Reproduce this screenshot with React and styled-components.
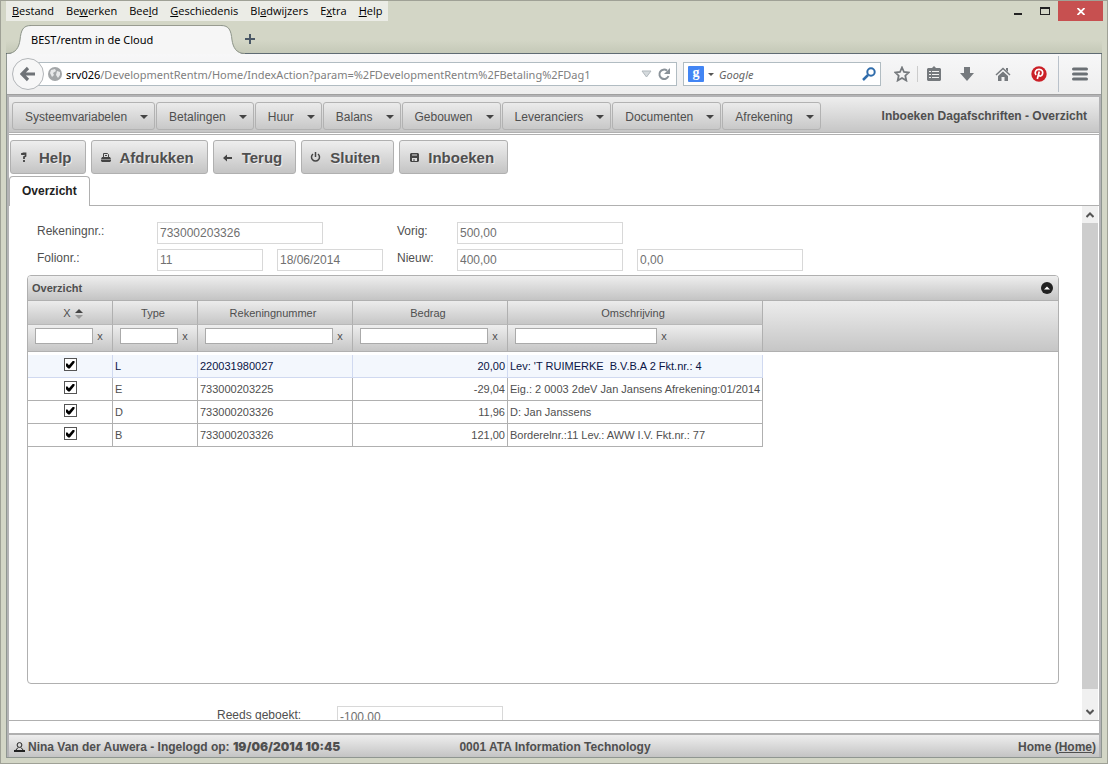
import styled, { createGlobalStyle } from "styled-components";

const GlobalStyle = createGlobalStyle`
  * {
    box-sizing: border-box;
  }
  body {
    margin: 0;
    font-family: "Liberation Sans", Arial, sans-serif;
    font-size: 12px;
    color: #4f4f4f;
  }
  button, input {
    font-family: inherit;
    font-size: inherit;
    color: inherit;
    margin: 0;
  }
  button {
    border: none;
    background: none;
    padding: 0;
  }
`;

const Window = styled.div`
  height: 100vh;
  display: flex;
  flex-direction: column;
  background: #d3d6c6;
  border: 1px solid #9fa196;
  padding: 0 5px 5px;
`;

/* ---------- browser ---------- */

const TitleBar = styled.div`
  height: 20px;
  flex: none;
  display: flex;
  justify-content: space-between;
  font-family: "Open Sans", "Noto Sans", sans-serif;
`;
const MenuBar = styled.nav`
  display: flex;
  background: #ebece6;
`;
const MenuBarItem = styled.button`
  padding: 0 6px;
  font-size: 11px;
  line-height: 20px;
  color: #000;
`;
const WindowButtons = styled.div`
  display: flex;
  margin-right: -1px;
`;
const WindowButton = styled.button`
  width: ${({ $close }) => ($close ? 45 : 27)}px;
  display: flex;
  align-items: center;
  justify-content: center;
  background: ${({ $close }) => ($close ? "#c75050" : "none")};
`;
const TabStrip = styled.div`
  height: 33px;
  flex: none;
  display: flex;
  align-items: flex-end;
  background: linear-gradient(#d3d6c6 60%, #c5c9b8);
  border-bottom: 1px solid #5f6b73;
`;
const BrowserTab = styled.div`
  display: flex;
  height: 29px;
  margin-bottom: -1px;

  svg {
    display: block;
  }
`;
const TabTitle = styled.div`
  width: 190px;
  background: #f6f6f6;
  border-top: 1px solid #989b90;
  font-family: "Noto Sans", "Open Sans", sans-serif;
  font-size: 11px;
  line-height: 28px;
  color: #000;
`;
const NewTab = styled.button`
  width: 14px;
  height: 28px;
  display: flex;
  align-items: center;
`;
const Browser = styled.div`
  flex: 1;
  min-height: 0;
  display: flex;
  flex-direction: column;
  border: 1px solid #8f9691;
  border-top: none;
`;
const NavBar = styled.div`
  height: 41px;
  flex: none;
  display: flex;
  align-items: center;
  background: linear-gradient(#f7f7f8, #eeeeee);
  border-bottom: 1px solid #a0a0a0;
  font-family: "Noto Sans", "Open Sans", sans-serif;
  padding-left: 5px;
`;
const BackButton = styled.button`
  position: relative;
  width: 32px;
  height: 32px;
  flex: none;
  border-radius: 50%;
  border: 1px solid #b3b6b9;
  background: #f7f7f7;
  display: flex;
  align-items: center;
  justify-content: center;
`;
const AddressBox = styled.label`
  flex: 1;
  min-width: 0;
  height: 24px;
  margin-left: -7px;
  padding: 0 4px 0 10px;
  display: flex;
  align-items: center;
  background: #fff;
  border: 1px solid #b1bcc2;

  svg {
    flex: none;
  }
`;
const Host = styled.span`
  margin-left: 4px;
  font-size: 11px;
  color: #000;
`;
const AddressInput = styled.input`
  flex: 1;
  min-width: 0;
  padding: 0;
  border: none;
  outline: none;
  background: none;
  font-size: 11px;
  color: #808080;
`;
const SearchBox = styled(AddressBox)`
  flex: 0 0 198px;
  margin: 0 5px 0 6px;
  padding: 0 4px;
`;
const SearchInput = styled(AddressInput)`
  margin-left: 1px;
  font-style: italic;
  color: #666;
`;
const NavButton = styled.button`
  width: ${({ $width = 36 }) => $width}px;
  height: 32px;
  flex: none;
  display: flex;
  align-items: center;
  justify-content: center;
`;
const NavDivider = styled.span`
  width: 1px;
  height: ${({ $tall }) => ($tall ? 36 : 16)}px;
  margin-left: ${({ $tall }) => ($tall ? 1 : 0)}px;
  background: ${({ $tall }) => ($tall ? "#b9c1ca" : "#cccccc")};
`;

/* ---------- application ---------- */

const Page = styled.div`
  flex: 1;
  min-height: 0;
  display: flex;
  flex-direction: column;
  background: #fff;
  border: solid #b3b3b5;
  border-width: 2px 2px 0 2px;
`;
const MenuHeader = styled.header`
  height: 36px;
  flex: none;
  display: flex;
  align-items: center;
  justify-content: space-between;
  padding: 3px 12px 0 3px;
  background: linear-gradient(#eeeeee, #c6c6c6);
  border-bottom: 1px solid #b0b0b0;
`;
const AppMenu = styled.nav`
  display: flex;
  gap: 1px;
`;
const AppMenuItem = styled.button`
  height: 28px;
  display: flex;
  align-items: center;
  gap: 13px;
  padding: 1px 6px 0 12px;
  border: 1px solid #b2b2b2;
  border-radius: 3px;
  background: linear-gradient(#ebebeb, #c8c8c8);
`;
const Caret = styled.span`
  border: 4px solid transparent;
  border-top-color: #444;
  border-bottom: none;
`;
const PageTitle = styled.h1`
  margin: 0;
  font-size: 12px;
`;
const Toolbar = styled.div`
  flex: none;
  display: flex;
  gap: 5px;
  margin-top: 1px;
  padding: 5px 1px 2px;
  border-top: 1px solid #b0b0b0;
`;
const ToolButton = styled.button`
  height: 34px;
  display: flex;
  align-items: center;
  gap: 6px;
  padding: 0 13px 0 6px;
  border: 1px solid #b0b0b0;
  border-radius: 3px;
  background: linear-gradient(#eeeeee, #c4c4c4);
  font-size: 15px;
  font-weight: bold;
  text-shadow: 1px 1px 0 #eee;
`;
const Tabs = styled.div`
  flex: none;
  height: 30px;
  border-bottom: 1px solid #b0b0b0;
`;
const Tab = styled.button`
  height: 30px;
  padding: 0 12px 2px;
  background: #fff;
  border: 1px solid #b0b0b0;
  border-bottom: none;
  border-radius: 4px 4px 0 0;
  font-weight: bold;
  color: #222;
`;
const ScrollPane = styled.div`
  flex: 1;
  min-height: 0;
  display: flex;
  border-bottom: 1px solid #b0b0b0;
`;
const Content = styled.main`
  flex: 1;
  min-width: 0;
  overflow: hidden;
  padding: 16px 23px 0 18px;
`;
const ScrollBar = styled.div`
  width: 17px;
  flex: none;
  display: flex;
  flex-direction: column;
  background: #f0f0f0;
  border-right: 1px solid #fff;
`;
const ScrollButton = styled.button`
  height: 17px;
  display: flex;
  align-items: center;
  justify-content: center;
`;
const ScrollThumb = styled.div`
  flex: 1;
  margin-bottom: 14px;
  background: #cdcdcd;
`;

const Form = styled.form`
  display: grid;
  grid-template-columns: 120px 120px 120px 60px 180px 180px;
  row-gap: 5px;
  padding-left: 10px;
`;
const Totals = styled.div`
  display: grid;
  grid-template-columns: 120px 180px;
  padding-left: 190px;
`;
const Label = styled.label`
  line-height: 18px;
`;
const Field = styled.input`
  width: ${({ $short }) => ($short ? 106 : 166)}px;
  height: 22px;
  padding: 0 2px;
  border: 1px solid #d8d8d8;
  background: #fff;
  color: #707070;
  ${({ $wide }) => $wide && "grid-column: span 2;"}
`;

const Panel = styled.section`
  height: 409px;
  margin: 4px 0 22px;
  border: 1px solid #b0b0b0;
  border-radius: 4px;
  overflow: hidden;
`;
const PanelHeader = styled.div`
  height: 25px;
  display: flex;
  align-items: center;
  justify-content: space-between;
  padding: 0 5px 0 4px;
  background: linear-gradient(#eeeeee, #c4c4c4);
  border-bottom: 1px solid #b0b0b0;

  h2 {
    margin: 0;
    font-size: 11px;
  }
`;
const Collapse = styled.button`
  display: flex;
`;
const Table = styled.table`
  width: 100%;
  table-layout: fixed;
  border-collapse: separate;
  border-spacing: 0;
  font-size: 11px;

  tbody::before {
    content: "";
    display: block;
    height: 3px;
  }
`;
const HeadCell = styled.th`
  height: 24px;
  padding: ${({ $sorted }) => ($sorted ? "0 0 0 6px" : "0 4px 0 0")};
  font-weight: normal;
  background: linear-gradient(#ececec, #c6c6c6);
  border-right: 1px solid #b0b0b0;
  border-bottom: 1px solid #b8b8b8;
`;
const FilterCell = styled.th`
  height: 27px;
  padding: 0 0 4px 7px;
  text-align: left;
  white-space: nowrap;
  background: linear-gradient(#eeeeee, #c6c6c6);
  border-right: 1px solid #b0b0b0;
  border-bottom: 1px solid #b0b0b0;
`;
const RestCell = styled.th`
  padding: 0;
  background: linear-gradient(#ececec, #c6c6c6);
  border-bottom: 1px solid #b0b0b0;
`;
const Filter = styled.input`
  width: ${({ $width }) => $width}px;
  height: 16px;
  padding: 0 2px;
  vertical-align: middle;
  border: 1px solid #aaa;
  background: #fff;
`;
const ClearFilter = styled.button`
  width: 14px;
  height: 16px;
  vertical-align: middle;
  line-height: 14px;
`;
const Cell = styled.td`
  height: 23px;
  padding: 0 2px;
  overflow: hidden;
  white-space: pre;
  text-align: ${({ $align = "left" }) => $align};
  border-right: 1px solid #b0b0b0;
  border-bottom: 1px solid #b0b0b0;
`;
const Row = styled.tr`
  ${({ $active }) =>
    $active &&
    `
    color: #0a1445;
    ${Cell} {
      background: #f3f7fd;
      border-color: #d0d9f0;
    }
  `}
`;
const Check = styled.input`
  appearance: none;
  display: block;
  width: 13px;
  height: 13px;
  margin: 0 auto 3px;
  border: 1px solid #555;
  background: #fff;

  &:checked::before {
    content: "";
    display: block;
    width: 9px;
    height: 9px;
    margin: 1px;
    background: #000;
    clip-path: polygon(0 40%, 22% 40%, 38% 58%, 80% 10%, 100% 10%, 100% 30%, 48% 95%, 30% 95%, 0 65%);
  }
`;
const SortIcon = styled.svg`
  margin-left: 4px;
  vertical-align: -2px;
`;

const Footer = styled.footer`
  height: 24px;
  flex: none;
  display: grid;
  grid-template-columns: 1fr auto 1fr;
  align-items: center;
  margin-top: 12px;
  padding: 1px 3px 0 5px;
  background: linear-gradient(#eeeeee, #c4c4c4);
  border-top: 2px solid #b0b0b0;
  font-weight: bold;

  a {
    color: inherit;
  }
`;
const User = styled.div`
  display: flex;
  align-items: center;
  white-space: pre;

  strong {
    font-family: Inter, sans-serif;
    font-weight: 900;
    font-size: 12px;
  }
  svg {
    margin-right: 3px;
  }
`;
const HomeLink = styled.div`
  text-align: right;
`;

const browserMenu = [
  ["", "B", "estand"],
  ["Be", "w", "erken"],
  ["Bee", "l", "d"],
  ["", "G", "eschiedenis"],
  ["Bl", "a", "dwijzers"],
  ["E", "x", "tra"],
  ["", "H", "elp"],
];

const appMenu = [
  "Systeemvariabelen",
  "Betalingen",
  "Huur",
  "Balans",
  "Gebouwen",
  "Leveranciers",
  "Documenten",
  "Afrekening",
];

const tools = [
  { name: "Help", icon: "help" },
  { name: "Afdrukken", icon: "print" },
  { name: "Terug", icon: "back" },
  { name: "Sluiten", icon: "power" },
  { name: "Inboeken", icon: "disk" },
];

const columns = [
  { name: "X", width: 85, filter: 58, sorted: true },
  { name: "Type", width: 85, filter: 58 },
  { name: "Rekeningnummer", width: 155, filter: 128 },
  { name: "Bedrag", width: 155, filter: 128 },
  { name: "Omschrijving", width: 255, filter: 142 },
];

const rows = [
  { type: "L", rekening: "220031980027", bedrag: "20,00", tekst: "Lev: 'T RUIMERKE  B.V.B.A 2 Fkt.nr.: 4" },
  { type: "E", rekening: "733000203225", bedrag: "-29,04", tekst: "Eig.: 2 0003 2deV Jan Jansens Afrekening:01/2014 -" },
  { type: "D", rekening: "733000203326", bedrag: "11,96", tekst: "D: Jan Janssens" },
  { type: "B", rekening: "733000203326", bedrag: "121,00", tekst: "Borderelnr.:11 Lev.: AWW I.V. Fkt.nr.: 77" },
];

const toolIcons = {
  help: (
    <path d="M5 6V5h1.500V4.500h2V7L7 8v2M7 11v2" fill="none" stroke="#444" strokeWidth="1.800" />
  ),
  print: (
    <>
      <path d="M5.500 8V4.500h4l1 1V8M7 6.500h2" fill="none" stroke="#444" />
      <path d="M4 8h8l1 2H3zM3 10.500h10V12l-1 1H4l-1-1z" fill="#444" />
    </>
  ),
  back: <path d="M3 9l4-3.500V8h5v2H7v2.500z" fill="#444" />,
  power: (
    <path d="M5 5a4 4 0 1 0 5 0M7.500 3v5" fill="none" stroke="#444" strokeWidth="1.500" />
  ),
  disk: (
    <>
      <path d="M4 5l1-1h7l1 1v7l-1 1H5l-1-1z" fill="#444" />
      <path d="M6 5.500h5v1H6zM6 9h5v3H8.500v-2h-1v2H6z" fill="#ddd" />
    </>
  ),
};

function BrowserChrome() {
  return (
    <>
      <TitleBar>
        <MenuBar>
          {browserMenu.map(([before, key, after]) => (
            <MenuBarItem key={after}>
              {before}
              <u>{key}</u>
              {after}
            </MenuBarItem>
          ))}
        </MenuBar>
        <WindowButtons>
          <WindowButton aria-label="Minimaliseren">
            <svg width="10" height="10"><path d="M1 7h8v2H1z" fill="#222" /></svg>
          </WindowButton>
          <WindowButton aria-label="Maximaliseren">
            <svg width="10" height="8"><path d="M0 0h10v8H0zM1 2v5h8V2z" fill="#222" fillRule="evenodd" /></svg>
          </WindowButton>
          <WindowButton $close aria-label="Sluiten">
            <svg width="8" height="7"><path d="M.500 0l7 7M7.500 0l-7 7" stroke="#fff" strokeWidth="1.800" /></svg>
          </WindowButton>
        </WindowButtons>
      </TitleBar>
      <TabStrip>
        <BrowserTab>
          <svg width="25" height="29">
            <path d="M1 29C10 29 13 22 14 15C15 5 17 .500 25 .500V29z" fill="#f6f6f6" />
            <path d="M1 28.500C10 28.500 13 22 14 15C15 5 17 .500 25 .500" fill="none" stroke="#8d9489" />
          </svg>
          <TabTitle>BEST/rentm in de Cloud</TabTitle>
          <svg width="24" height="29">
            <path d="M0 .500C8 .500 10 5 11 15C12 22 15 29 24 29H0z" fill="#f6f6f6" />
            <path d="M0 .500C8 .500 10 5 11 15C12 22 15 28.500 24 28.500" fill="none" stroke="#8d9489" />
          </svg>
        </BrowserTab>
        <NewTab aria-label="Nieuw tabblad">
          <svg width="10" height="10"><path d="M4 0h2v4h4v2H6v4H4V6H0V4h4z" fill="#4a5866" /></svg>
        </NewTab>
      </TabStrip>
    </>
  );
}

function Navigation() {
  return (
    <NavBar>
      <BackButton aria-label="Vorige">
        <svg width="16" height="16"><path d="M8 2L2 8l6 6M3 8h12" fill="none" stroke="#6f7377" strokeWidth="3.200" /></svg>
      </BackButton>
      <AddressBox>
        <svg width="14" height="14">
          <circle cx="7" cy="7" r="7" fill="#a3a6a8" />
          <path d="M3 3l4-1 1 2-3 2 1 2-2 2-2-4zM9 4l3 1v3l-2 3-2-3z" fill="#e8e9ea" />
        </svg>
        <Host>srv026</Host>
        <AddressInput
          aria-label="Adres"
          defaultValue="/DevelopmentRentm/Home/IndexAction?param=%2FDevelopmentRentm%2FBetaling%2FDag1"
        />
        <svg width="11" height="8"><path d="M1 1h9L5.500 7z" fill="#d5dadd" stroke="#b0b7bc" /></svg>
        <svg width="20" height="14">
          <path d="M16.500 9A4.700 4.700 0 1 1 15 3.600" fill="none" stroke="#8a9299" strokeWidth="2" />
          <path d="M18 1v6h-6z" fill="#8a9299" />
        </svg>
      </AddressBox>
      <SearchBox>
        <svg width="16" height="16">
          <rect width="16" height="16" rx="1" fill="#4285f4" />
          <text x="8" y="11" textAnchor="middle" fontFamily="Liberation Serif, serif" fontSize="14" fontWeight="bold" fill="#fff">g</text>
        </svg>
        <svg width="14" height="5"><path d="M4 1h6l-3 3z" fill="#555" /></svg>
        <SearchInput aria-label="Zoeken" defaultValue="Google" />
        <svg width="14" height="14">
          <circle cx="9" cy="5" r="3.700" fill="none" stroke="#2f6cab" strokeWidth="2" />
          <path d="M6 8l-5 5" stroke="#2f6cab" strokeWidth="2.500" />
        </svg>
      </SearchBox>
      <NavButton $width={31} aria-label="Bladwijzer">
        <svg width="16" height="16">
          <path d="M8 1.500l2 4.500 4.800.500-3.500 3.200 1 4.800L8 12l-4.300 2.500 1-4.800L1.200 6.500 6 6z" fill="none" stroke="#75797d" strokeWidth="1.800" />
        </svg>
      </NavButton>
      <NavDivider />
      <NavButton $width={31} aria-label="Lijst">
        <svg width="14" height="16">
          <path d="M1 2h4l2-2 2 2h4l1 1v11l-1 1H1l-1-1V3z" fill="#75797d" />
          <path d="M2 5h2v1H2zM5 5h7v1H5zM2 8h2v1H2zM5 8h7v1H5zM2 11h2v1H2zM5 11h7v1H5z" fill="#f2f2f2" />
        </svg>
      </NavButton>
      <NavButton aria-label="Downloads">
        <svg width="14" height="14"><path d="M4 0h6v6h4l-7 8-7-8h4z" fill="#75797d" /></svg>
      </NavButton>
      <NavButton aria-label="Startpagina">
        <svg width="16" height="15">
          <path d="M1 8l7-6.500L15 8" fill="none" stroke="#75797d" strokeWidth="1.500" />
          <path d="M3 9l5-4.500L13 9v5H9.500v-4h-3v4H3zM11 1h2v4l-2-2z" fill="#75797d" />
        </svg>
      </NavButton>
      <NavButton aria-label="Pinterest">
        <svg width="16" height="16">
          <circle cx="8" cy="8" r="7.700" fill="#cb2027" />
          <path d="M5 9C3 6 5 3.400 8 3.400S12.200 5.500 11.500 8 8.500 10.500 7.800 9M8.300 5.500L6.300 13" fill="none" stroke="#fff" strokeWidth="1.700" />
        </svg>
      </NavButton>
      <NavDivider $tall />
      <NavButton $width={42} aria-label="Menu">
        <svg width="16" height="14"><path d="M1.500 2h13M1.500 7h13M1.500 12h13" stroke="#6b7075" strokeWidth="3" strokeLinecap="round" /></svg>
      </NavButton>
    </NavBar>
  );
}

function Grid() {
  return (
    <Table>
      <colgroup>
        {columns.map((column) => (
          <col key={column.name} width={column.width} />
        ))}
        <col />
      </colgroup>
      <thead>
        <tr>
          {columns.map((column) => (
            <HeadCell key={column.name} scope="col" $sorted={column.sorted}>
              {column.name}
              {column.sorted && (
                <SortIcon width="8" height="10">
                  <path d="M0 4l4-4 4 4z" fill="#444" />
                  <path d="M0 6l4 4 4-4z" fill="#999" />
                </SortIcon>
              )}
            </HeadCell>
          ))}
          <RestCell rowSpan={2} />
        </tr>
        <tr>
          {columns.map((column) => (
            <FilterCell key={column.name}>
              <Filter $width={column.filter} aria-label={`Filter ${column.name}`} />
              <ClearFilter>x</ClearFilter>
            </FilterCell>
          ))}
        </tr>
      </thead>
      <tbody>
        {rows.map((row, i) => (
          <Row key={row.type} $active={i === 0}>
            <Cell>
              <Check type="checkbox" defaultChecked aria-label={row.tekst} />
            </Cell>
            <Cell>{row.type}</Cell>
            <Cell>{row.rekening}</Cell>
            <Cell $align="right">{row.bedrag}</Cell>
            <Cell>{row.tekst}</Cell>
          </Row>
        ))}
      </tbody>
    </Table>
  );
}

export default function App() {
  return (
    <Window>
      <GlobalStyle />
      <BrowserChrome />
      <Browser>
        <Navigation />
        <Page>
          <MenuHeader>
            <AppMenu>
              {appMenu.map((item) => (
                <AppMenuItem key={item}>
                  {item}
                  <Caret />
                </AppMenuItem>
              ))}
            </AppMenu>
            <PageTitle>Inboeken Dagafschriften - Overzicht</PageTitle>
          </MenuHeader>
          <Toolbar>
            {tools.map((tool) => (
              <ToolButton key={tool.name}>
                <svg width="16" height="16">{toolIcons[tool.icon]}</svg>
                {tool.name}
              </ToolButton>
            ))}
          </Toolbar>
          <Tabs>
            <Tab>Overzicht</Tab>
          </Tabs>
          <ScrollPane>
            <Content>
              <Form>
                <Label htmlFor="rekening">Rekeningnr.:</Label>
                <Field id="rekening" $wide defaultValue="733000203326" />
                <Label htmlFor="vorig">Vorig:</Label>
                <Field id="vorig" $wide defaultValue="500,00" />
                <Label htmlFor="folio">Folionr.:</Label>
                <Field id="folio" $short defaultValue="11" />
                <Field aria-label="Datum" $short defaultValue="18/06/2014" />
                <Label htmlFor="nieuw">Nieuw:</Label>
                <Field id="nieuw" defaultValue="400,00" />
                <Field aria-label="Verschil" defaultValue="0,00" />
              </Form>
              <Panel>
                <PanelHeader>
                  <h2>Overzicht</h2>
                  <Collapse aria-label="Inklappen">
                    <svg width="12" height="12">
                      <circle cx="6" cy="6" r="6" fill="#222" />
                      <path d="M3 7.500l3-3 3 3z" fill="#fff" />
                    </svg>
                  </Collapse>
                </PanelHeader>
                <Grid />
              </Panel>
              <Totals>
                <Label htmlFor="geboekt">Reeds geboekt:</Label>
                <Field id="geboekt" defaultValue="-100,00" />
              </Totals>
            </Content>
            <ScrollBar>
              <ScrollButton aria-label="Omhoog">
                <svg width="8" height="6"><path d="M.500 5L4 1.500 7.500 5" fill="none" stroke="#555" strokeWidth="2" /></svg>
              </ScrollButton>
              <ScrollThumb />
              <ScrollButton aria-label="Omlaag">
                <svg width="8" height="6"><path d="M.500 1L4 4.500 7.500 1" fill="none" stroke="#555" strokeWidth="2" /></svg>
              </ScrollButton>
            </ScrollBar>
          </ScrollPane>
          <Footer>
            <User>
              <svg width="11" height="10">
                <circle cx="5.500" cy="3" r="2.400" fill="none" stroke="#222" />
                <path d="M4 5.500L1.500 8.500h8L7 5.500" fill="none" stroke="#222" />
                <path d="M0 8h11v2H0z" fill="#222" />
              </svg>
              {"Nina Van der Auwera - Ingelogd op: "}
              <strong>19/06/2014 10:45</strong>
            </User>
            <div>0001 ATA Information Technology</div>
            <HomeLink>
              Home (<a href="#home">Home</a>)
            </HomeLink>
          </Footer>
        </Page>
      </Browser>
    </Window>
  );
}
